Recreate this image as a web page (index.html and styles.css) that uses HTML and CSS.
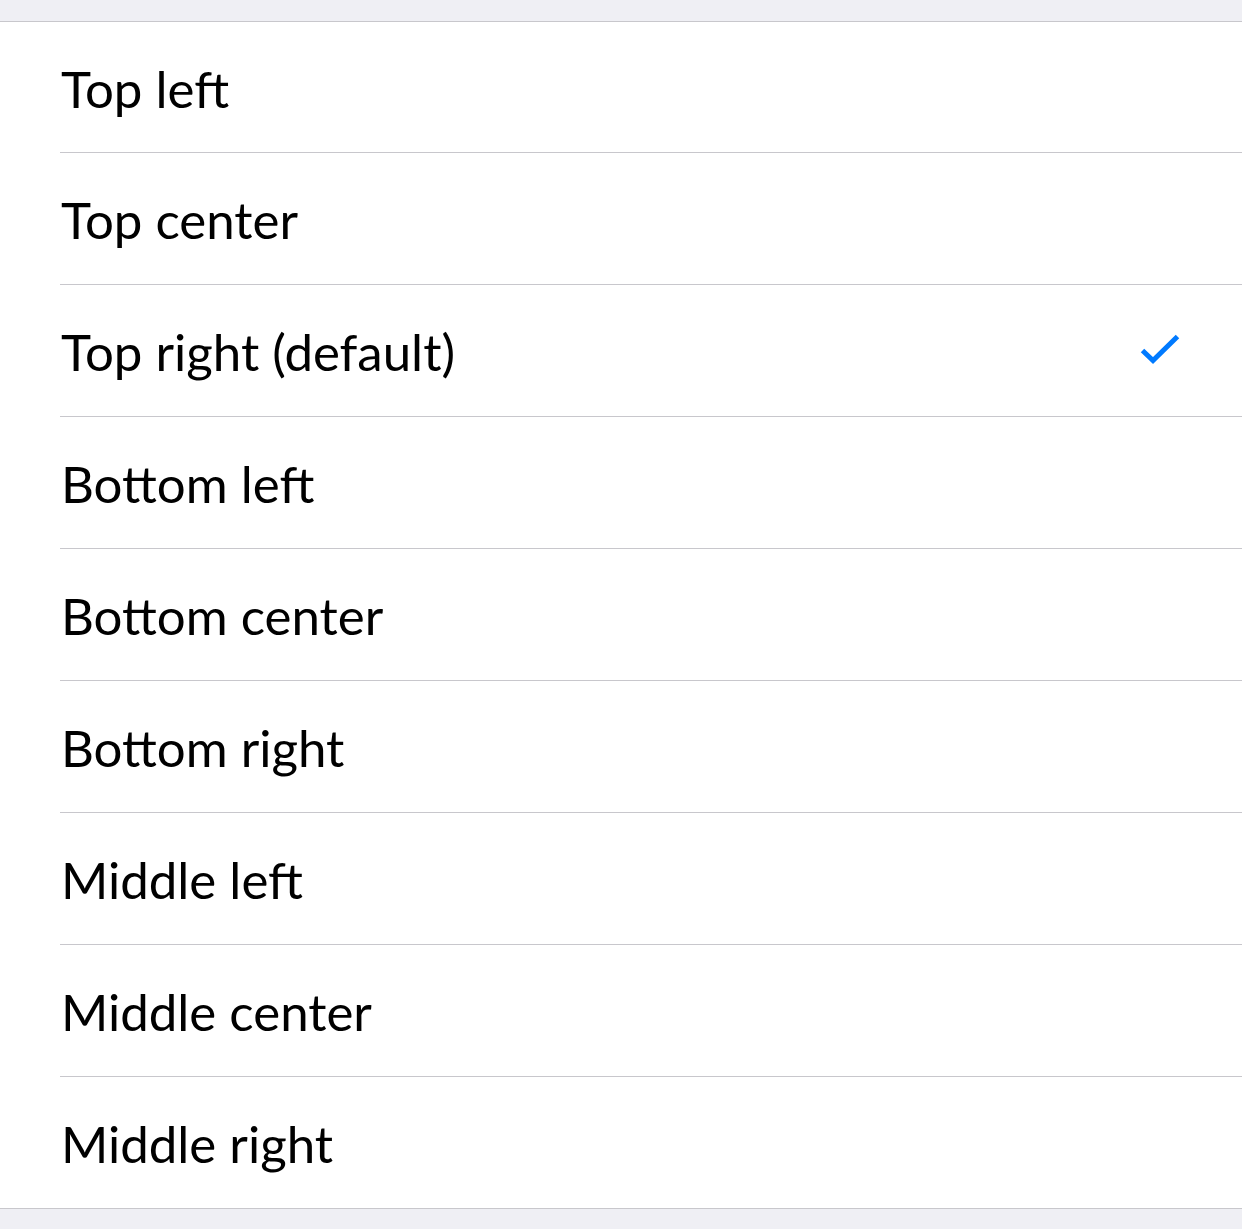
FILE: index.html
```html
<!DOCTYPE html>
<html lang="en">
<head>
    <meta charset="UTF-8">
    <title>Position</title>
    <link rel="stylesheet" href="styles.css">
</head>
<body>

<ul class="option-list">
    <li class="option"><span class="option-label">Top left</span></li>
    <li class="option"><span class="option-label">Top center</span></li>
    <li class="option selected">
        <span class="option-label">Top right (default)</span>
        <svg class="check" width="40" height="31" viewBox="0 0 40 31">
            <path d="M2.5 16.5 L13 26.5 L37.5 2.5" fill="none" stroke="#007aff" stroke-width="5"/>
        </svg>
    </li>
    <li class="option"><span class="option-label">Bottom left</span></li>
    <li class="option"><span class="option-label">Bottom center</span></li>
    <li class="option"><span class="option-label">Bottom right</span></li>
    <li class="option"><span class="option-label">Middle left</span></li>
    <li class="option"><span class="option-label">Middle center</span></li>
    <li class="option"><span class="option-label">Middle right</span></li>
</ul>

</body>
</html>
```

FILE: styles.css
```css
html, body {
    margin: 0;
    padding: 0;
}

body {
    font-family: Lato, 'Noto Sans', sans-serif;
    background-color: #efeff4;
    padding-top: 21px;
    height: 1229px;
    box-sizing: border-box;
    color: #000;
}

.option-list {
    list-style: none;
    margin: 0;
    padding: 0 0 0 60px;
    background: white;
    border-top: 1px solid #c8c7cc;
    border-bottom: 1px solid #c8c7cc;
}

.option {
    display: flex;
    align-items: center;
    justify-content: space-between;
    height: 131px;
    padding: 0 62px 0 1px;
    border-bottom: 1px solid #c8c7cc;
    font-size: 51px;
}

.option:first-child {
    height: 130px;
}

.option:last-child {
    border-bottom: none;
}

.option-label {
    line-height: 1;
    padding-top: 2px;
}

.check {
    display: block;
    margin-bottom: 2px;
}
```
